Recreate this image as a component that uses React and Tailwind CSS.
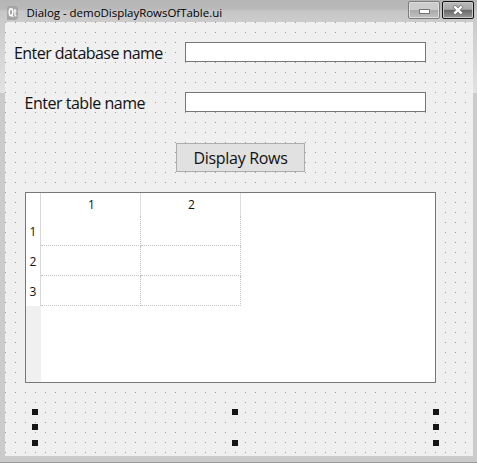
import React from "react";

function TitleBar() {
  return (
    <header className="flex h-[22px] shrink-0 items-start bg-[linear-gradient(180deg,#b5b5b5_0px,#b9b9b9_9px,#c6c6c6_11px,#cbcbcb_22px)]">
      <svg className="ml-[7px] mt-[6px] shrink-0" width="13" height="14" viewBox="0 0 13 14">
        <path d="M1.5 0H9L11 2V12L9 14H0V1.5Z" fill="#a5a5a5" />
        <ellipse cx="4" cy="6.3" rx="1.8" ry="3.6" fill="none" stroke="#fff" strokeWidth="1.4" />
        <path d="M4.2 8.4L6.2 11M8 3V9Q8.1 10.2 9.5 9.8M6.7 5H9.5" fill="none" stroke="#fff" strokeWidth="1.2" />
      </svg>
      <h1 className="ml-[6.5px] mt-[5px] whitespace-nowrap text-[11.5px] leading-[16px] tracking-[-0.03px] text-black">
        Dialog - demoDisplayRowsOfTable.ui
      </h1>
      <div className="ml-auto mr-[3px] mt-px flex gap-[2px]">
        <button aria-label="Minimize" className="flex h-[18px] w-[32px] items-center justify-center rounded-[2px] border border-[#7d7d7d] bg-[linear-gradient(180deg,#cccccc_50%,#a9a9a9_50%,#c2c2c2_100%)] shadow-[inset_0_0_0_1px_#dcdcdc]">
          <svg width="11" height="5" viewBox="0 0 11 5" className="mt-[3px]">
            <rect x="0.5" y="0.5" width="10" height="4" fill="#fff" stroke="#777" />
          </svg>
        </button>
        <button aria-label="Close" className="flex h-[18px] w-[32px] items-center justify-center rounded-[2px] border border-[#151515] bg-[linear-gradient(180deg,#b8b8b8_0%,#aaa_46%,#666_50%,#999_100%)] shadow-[inset_0_0_0_1px_#c9c9c9]">
          <svg width="12" height="10" viewBox="0 0 12 10" className="-mt-px">
            <path d="M2 1L10 9M10 1L2 9" stroke="#666" strokeWidth="3.8" />
            <path d="M2.3 1.3L9.7 8.7M9.7 1.3L2.3 8.7" stroke="#fff" strokeWidth="2.4" />
          </svg>
        </button>
      </div>
    </header>
  );
}

function Field({ label, labelClass }) {
  return (
    <div className="flex h-[20px] items-center">
      <label className={`w-[180px] shrink-0 whitespace-nowrap text-[16px] leading-[20px] ${labelClass}`}>
        {label}
      </label>
      <input className="h-[20px] w-[241px] border border-[#777] bg-white outline-none" />
    </div>
  );
}

function Table() {
  const cell = "h-[30px] border-b border-r border-dotted border-[#c4c4c4]";
  const num = "flex items-center justify-center border-r border-[#d8d8d8] pt-[2px]";
  const head = "flex items-center justify-center border-r border-[#dedede] pl-[2px] pt-px";
  return (
    <div className="ml-[20px] mt-[20px] flex h-[191px] w-[411px] shrink-0 flex-col border border-[#777] bg-white text-[12px] leading-[16px] text-[#111]">
      <div className="grid shrink-0 grid-cols-[15px_100px_100px] grid-rows-[23px_30px_30px_30px]">
        <div className="border-r border-[#d8d8d8]" />
        <div className={head}>1</div>
        <div className={head}>2</div>
        {[1, 2, 3].map((n) => (
          <React.Fragment key={n}>
            <div className={num}>{n}</div>
            <div className={cell} />
            <div className={cell} />
          </React.Fragment>
        ))}
      </div>
      <div className="w-[15px] grow bg-[#f0f0f0]" />
    </div>
  );
}

function Handles() {
  return (
    <div className="ml-[27px] mt-[26px] flex w-[407px] flex-col">
      <div className="flex">
        <i className="size-[6px] bg-[#151515]" />
        <i className="ml-[194px] size-[6px] bg-[#151515]" />
        <i className="ml-auto size-[6px] bg-[#151515]" />
      </div>
      <div className="mt-[9px] flex justify-between">
        <i className="size-[6px] bg-[#151515]" />
        <i className="size-[6px] bg-[#151515]" />
      </div>
      <div className="mt-[10px] flex">
        <i className="size-[6px] bg-[#151515]" />
        <i className="ml-[194px] size-[6px] bg-[#151515]" />
        <i className="ml-auto size-[6px] bg-[#151515]" />
      </div>
    </div>
  );
}

export default function App() {
  return (
    <div className="flex h-[463px] w-[477px] flex-col overflow-hidden border-b border-[#999] bg-[#cbcbcb] font-['Open_Sans','Noto_Sans',sans-serif] text-[#111]">
      <TitleBar />
      <div className="flex min-h-0 grow">
        <div className="h-[71px] w-[5px] shrink-0 bg-[linear-gradient(180deg,#cbcbcb,#e2e2e2)]" />
        <main className="flex h-[434px] w-[468px] shrink-0 flex-col bg-[#f0f0f0] bg-[linear-gradient(90deg,transparent_1px,#f0f0f0_1px),linear-gradient(180deg,#999_1px,#f0f0f0_1px)] bg-[size:10px_10px] pt-[20px]">
          <Field label="Enter database name" labelClass="pl-[9px] pt-[2px] tracking-[-0.56px]" />
          <div className="h-[30px] shrink-0" />
          <Field label="Enter table name" labelClass="pl-[19.5px] pt-[2px] tracking-[-0.48px]" />
          <button className="ml-[171px] mt-[31px] h-[29px] w-[129px] shrink-0 whitespace-nowrap border border-[#adadad] bg-[#e1e1e1] pt-px text-[16px] leading-[27px] tracking-[-0.3px]">
            Display Rows
          </button>
          <Table />
          <Handles />
        </main>
        <div className="h-[71px] w-[4px] shrink-0 bg-[linear-gradient(180deg,#cbcbcb,#e2e2e2)]" />
      </div>
    </div>
  );
}
